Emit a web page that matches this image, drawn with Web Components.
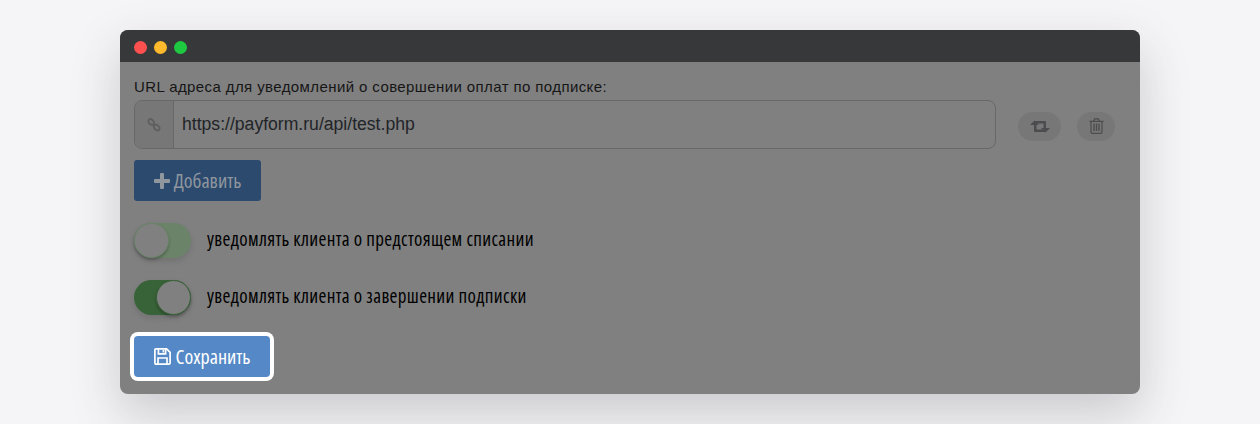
<!DOCTYPE html>
<html>
<head>
<meta charset="utf-8">
<title>Подписка</title>
<style>
    html, body { margin: 0; height: 100%; background: #f5f5f7; }
    body { padding: 30px 120px 0; box-sizing: border-box; overflow: hidden; }
</style>
</head>
<body>
<app-window>
    <url-field label="URL адреса для уведомлений о совершении оплат по подписке:" value="https://payform.ru/api/test.php"></url-field>
    <action-button kind="add" icon="plus">Добавить</action-button>
    <toggle-row>уведомлять клиента о предстоящем списании</toggle-row>
    <toggle-row checked>уведомлять клиента о завершении подписки</toggle-row>
    <action-button kind="save" icon="save">Сохранить</action-button>
</app-window>

<script>
const narrowFont = `"Open Sans", "Noto Sans", sans-serif`;

const ICONS = {
    link: `<svg width="16" height="16" viewBox="0 0 16 16" fill="none" stroke="#5e5e5e" stroke-width="1.8"><path d="M3 2.6 Q4.4 1.4 6 2.6 L7.6 4.2 Q8.8 5.8 7.6 7.2 Q6 8.6 4.4 7.4 L2.8 5.8 Q1.6 4.2 3 2.6 Z"/><path d="M8.6 8.2 Q10 7 11.6 8.2 L13.2 9.8 Q14.4 11.4 13.2 12.8 Q11.6 14.2 10 13 L8.4 11.4 Q7.2 9.8 8.6 8.2 Z"/></svg>`,
    retweet: `<svg width="20" height="13" viewBox="0 0 20 13" fill="#4c4c4e"><path d="M0 5 L4.5 .5 L9 5 H6.5 V9.5 H13 L15.5 12 H5 Q4 12 4 11 V5 Z"/><path d="M20 8 L15.5 12.5 L11 8 H13.5 V3.5 H7 L4.5 1 H15 Q16 1 16 2 V8 Z"/></svg>`,
    trash: `<svg width="15" height="16" viewBox="0 0 15 16" fill="none" stroke="#4c4c4e" stroke-width="1.2"><path d="M0.5 3.4 H14.5"/><path d="M4.6 3.2 L5.6 .8 H9.4 L10.4 3.2"/><path d="M2 3.4 V14 Q2 15.4 3.4 15.4 H11.6 Q13 15.4 13 14 V3.4"/><path d="M5 5.6 V13 M7.5 5.6 V13 M10 5.6 V13" stroke-width="1.4"/></svg>`,
    plus: `<svg width="16" height="16" viewBox="0 0 16 16" fill="currentColor"><path d="M6 1 Q6 0 7 0 H9 Q10 0 10 1 V6 H15 Q16 6 16 7 V9 Q16 10 15 10 H10 V15 Q10 16 9 16 H7 Q6 16 6 15 V10 H1 Q0 10 0 9 V7 Q0 6 1 6 H6 Z"/></svg>`,
    save: `<svg width="17" height="17" viewBox="0 0 17 17" fill="none" stroke="currentColor" stroke-width="1.7"><path d="M2 .9 H12.6 L16.1 4.4 V15 Q16.1 16.1 15 16.1 H2 Q.9 16.1 .9 15 V2 Q.9 .9 2 .9 Z"/><path d="M4.4 1 V5.8 H11.6 V1"/><path d="M9.4 2 V4.6" stroke-width="1.6"/><path d="M4 16 V10 H13 V16"/></svg>`
};

class AppWindow extends HTMLElement {
    constructor() {
        super();
        this.attachShadow({ mode: 'open' });
        this.shadowRoot.innerHTML = `
            <style>
                :host {
                    display: block;
                    width: 1020px;
                    height: 364px;
                    border-radius: 8px;
                    background: #808080;
                    box-shadow: 0 20px 50px rgba(50, 50, 60, 0.22);
                    overflow: hidden;
                }
                .bar {
                    display: flex;
                    align-items: center;
                    gap: 7px;
                    height: 32px;
                    padding: 2px 0 0 14px;
                    box-sizing: border-box;
                    background: #37383a;
                }
                .dot { width: 13px; height: 13px; border-radius: 50%; }
                .content {
                    display: flex;
                    flex-direction: column;
                    align-items: flex-start;
                    padding: 16px 14px 0;
                }
            </style>
            <div class="bar">
                <span class="dot" style="background:#ff5050"></span>
                <span class="dot" style="background:#ffb92c"></span>
                <span class="dot" style="background:#1ec840"></span>
            </div>
            <div class="content"><slot></slot></div>
        `;
    }
}

class UrlField extends HTMLElement {
    constructor() {
        super();
        this.attachShadow({ mode: 'open' });
    }

    connectedCallback() {
        this.shadowRoot.innerHTML = `
            <style>
                :host { display: block; width: 100%; font-family: "Liberation Sans", Arial, sans-serif; }
                label {
                    display: block;
                    height: 22px;
                    font-size: 15px;
                    line-height: 18px;
                    letter-spacing: 0.4px;
                    color: #161616;
                    white-space: nowrap;
                }
                .row { display: flex; align-items: center; }
                .group {
                    display: flex;
                    width: 862px;
                    height: 49px;
                    box-sizing: border-box;
                    border: 1px solid #686868;
                    border-radius: 8px;
                    overflow: hidden;
                }
                .addon {
                    display: flex;
                    align-items: center;
                    justify-content: center;
                    width: 38px;
                    background: #777777;
                    border-right: 1px solid #686868;
                }
                .value {
                    flex: 1;
                    padding-left: 8px;
                    font-size: 17.6px;
                    line-height: 47px;
                    color: #222428;
                }
                .tools { display: flex; gap: 16px; margin: 3px 0 0 22px; }
                .tool {
                    display: flex;
                    align-items: center;
                    justify-content: center;
                    height: 29px;
                    border-radius: 15px;
                    background: #777777;
                }
            </style>
            <label>${this.getAttribute('label')}</label>
            <div class="row">
                <div class="group">
                    <div class="addon">${ICONS.link}</div>
                    <div class="value">${this.getAttribute('value')}</div>
                </div>
                <div class="tools">
                    <div class="tool" style="width:43px">${ICONS.retweet}</div>
                    <div class="tool" style="width:38px">${ICONS.trash}</div>
                </div>
            </div>
        `;
    }
}

class ActionButton extends HTMLElement {
    constructor() {
        super();
        this.attachShadow({ mode: 'open' });
    }

    connectedCallback() {
        const save = this.getAttribute('kind') === 'save';
        this.shadowRoot.innerHTML = `
            <style>
                :host {
                    display: inline-flex;
                    align-items: center;
                    justify-content: center;
                    gap: ${save ? 5 : 4}px;
                    box-sizing: border-box;
                    width: ${save ? 136 : 127}px;
                    height: 41px;
                    margin-top: ${save ? 21 : 11}px;
                    border-radius: 3px;
                    background: ${save ? '#5588c6' : '#2b4a6e'};
                    color: ${save ? '#ffffff' : '#8f969e'};
                    font: 20px ${narrowFont};
                    font-stretch: 75%;
                    ${save ? 'box-shadow: 0 0 0 4px #fff; border-radius: 4px;' : ''}
                }
                svg { display: block; }
            </style>
            ${ICONS[this.getAttribute('icon')]}
            <span><slot></slot></span>
        `;
    }
}

class ToggleRow extends HTMLElement {
    constructor() {
        super();
        this.attachShadow({ mode: 'open' });
    }

    connectedCallback() {
        const on = this.hasAttribute('checked');
        const track = on ? '#386238' : '#6b8469';
        this.shadowRoot.innerHTML = `
            <style>
                :host {
                    display: flex;
                    align-items: center;
                    gap: 16px;
                    height: 35px;
                    margin-top: 22px;
                    color: #000000;
                    font: 19px ${narrowFont};
                    font-stretch: 75%;
                    letter-spacing: 0.34px;
                }
                .track {
                    display: flex;
                    justify-content: ${on ? 'flex-end' : 'flex-start'};
                    width: 57px;
                    height: 35px;
                    border-radius: 18px;
                    background: ${track};
                    box-shadow: 0 3px 6px rgba(0, 0, 0, 0.12);
                }
                .knob {
                    width: 35px;
                    height: 35px;
                    box-sizing: border-box;
                    border-radius: 50%;
                    background: #808080;
                    border: 1px solid ${track};
                    box-shadow: 0 2px 3px rgba(0, 0, 0, 0.25);
                }
                .text { margin-top: -3px; }
            </style>
            <div class="track"><div class="knob"></div></div>
            <span class="text"><slot></slot></span>
        `;
    }
}

customElements.define('app-window', AppWindow);
customElements.define('url-field', UrlField);
customElements.define('action-button', ActionButton);
customElements.define('toggle-row', ToggleRow);
</script>
</body>
</html>
